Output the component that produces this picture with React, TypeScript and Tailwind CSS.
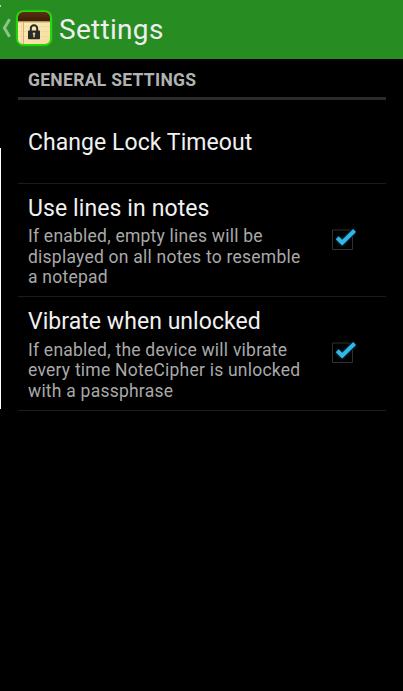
import React from "react";

function NoteIcon() {
  return (
    <svg width="38" height="38" viewBox="0 0 38 38" className="-ml-px mb-[3px] shrink-0">
      <defs>
        <linearGradient id="cover" x1="0" y1="0" x2="0" y2="1">
          <stop offset="0" stopColor="#5c3310" />
          <stop offset="1" stopColor="#3c1c06" />
        </linearGradient>
        <linearGradient id="paper" x1="0" y1="0" x2="1" y2="1">
          <stop offset="0" stopColor="#fdeec0" />
          <stop offset="1" stopColor="#f8dc9a" />
        </linearGradient>
        <clipPath id="page">
          <rect x="3" y="3" width="32" height="32" rx="5" />
        </clipPath>
      </defs>
      <rect x="0.6" y="0.8" width="37" height="36.6" rx="8" fill="#27a81a" />
      <rect x="1.2" y="1.4" width="35.8" height="35.4" rx="7.4" fill="#22dc08" />
      <g clipPath="url(#page)">
        <rect x="2" y="2" width="34" height="34" fill="url(#paper)" />
        <rect x="2" y="2" width="34" height="10.4" fill="url(#cover)" />
        <path d="M2 12.9H36" stroke="#a39b62" strokeWidth="1" />
        <path d="M2 17.5H36M2 22.5H36M2 27.5H36" stroke="#e6dda6" strokeWidth="0.8" />
        <path d="M8.5 13V36" stroke="#f3a173" strokeWidth="1" />
        <path d="M6.5 13V36" stroke="#f8cd9a" strokeWidth="0.8" />
      </g>
      <path d="M15.8 22.5V19.4a3.2 3.2 0 0 1 6.4 0V22.5" fill="none" stroke="#292b28" strokeWidth="2" />
      <rect x="13" y="21.6" width="12" height="8.6" rx="0.8" fill="#292b28" />
      <path d="M19 23.4a1.3 1.3 0 0 1 .7 2.4V28.2h-1.4v-2.4a1.3 1.3 0 0 1 .7-2.4z" fill="#e9d49a" />
    </svg>
  );
}

function CheckMark() {
  return (
    <svg width="32" height="32" viewBox="0 0 32 32" className="mb-[2px] shrink-0 overflow-visible">
      <defs>
        <filter id="glow" x="-50%" y="-50%" width="200%" height="200%">
          <feGaussianBlur stdDeviation="1.8" />
        </filter>
      </defs>
      <path d="M22 7H4.5v19.5h20V14" fill="none" stroke="#303030" strokeWidth="1" />
      <path d="M9.5 15.2L14.2 19.8L26 8" fill="none" stroke="#087da8" strokeWidth="4" filter="url(#glow)" opacity="0.75" />
      <path d="M9.2 14.8L14.2 19.7L26.6 7.5" fill="none" stroke="#33b5e5" strokeWidth="4" />
    </svg>
  );
}

function CheckRow({ title, lines, titleClass }: { title: string; lines: string[]; titleClass: string }) {
  return (
    <div className="flex h-[113.5px] items-center border-b border-[#1c1c1c] pl-[10px] pr-[26px]">
      <div className="flex-1 pt-[3px]">
        <h2 className={"whitespace-nowrap text-[23px] leading-[28px] text-[#f1f1f1] " + titleClass}>{title}</h2>
        <p className="mt-[3.5px] whitespace-nowrap text-[17.5px] leading-[20.5px] tracking-[0.23px] text-[#a9a9a9]">
          {lines.map((line) => (
            <span key={line} className="block">{line}</span>
          ))}
        </p>
      </div>
      <CheckMark />
    </div>
  );
}

export default function App() {
  return (
    <div className="relative h-[691px] w-[403px] overflow-hidden bg-black font-['Roboto',sans-serif]">
      <header className="flex h-[59px] items-center bg-[#278d22]">
        <svg width="16" height="24" viewBox="0 0 16 24" className="mb-[3px] shrink-0">
          <path d="M9.6 3.2L4.4 12L9.6 20.8" fill="none" stroke="#8dc28b" strokeWidth="3" />
        </svg>
        <NoteIcon />
        <h1 className="ml-[6px] text-[28px] leading-[34px] tracking-[0.3px] text-[#eeeeee]">Settings</h1>
      </header>
      <main className="mx-[18px] w-[368px]">
        <div className="flex h-[41px] items-center border-b-[3px] border-[#2b2b2b] pl-[10px] pt-1 text-[17.5px] font-bold leading-[20px] tracking-[0.3px] text-[#b2b2b2]">
          GENERAL SETTINGS
        </div>
        <div className="flex h-[83.5px] items-center border-b border-[#1c1c1c] pl-[10px] pt-[3px] text-[23px] leading-[28px] tracking-[0.06px] text-[#f1f1f1]">
          Change Lock Timeout
        </div>
        <CheckRow
          title="Use lines in notes"
          titleClass="tracking-[0.1px]"
          lines={["If enabled, empty lines will be", "displayed on all notes to resemble", "a notepad"]}
        />
        <CheckRow
          title="Vibrate when unlocked"
          titleClass="tracking-[0.05px]"
          lines={["If enabled, the device will vibrate", "every time NoteCipher is unlocked", "with a passphrase"]}
        />
      </main>
      <div className="absolute left-0 top-[148px] h-[261px] w-px bg-white" />
      <div className="absolute left-0 top-[5px] h-[2px] w-px bg-[#f3b5ef]" />
    </div>
  );
}
